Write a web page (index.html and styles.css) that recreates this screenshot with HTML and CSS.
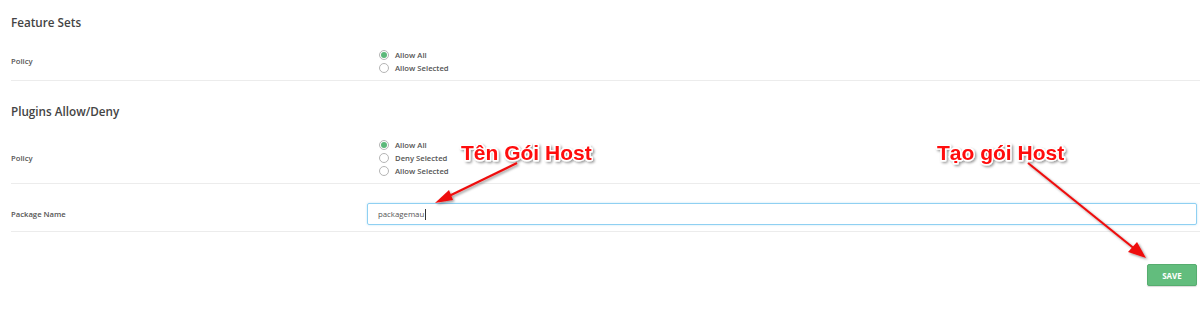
FILE: index.html
```html
<!DOCTYPE html>
<html>
<head>
<meta charset="utf-8">
<link rel="stylesheet" href="styles.css">
</head>
<body>
<div class="page">
  <section class="section first">
    <h2 class="heading">Feature Sets</h2>
    <div class="row">
      <div class="label">Policy</div>
      <div class="control">
        <div class="radios">
          <div class="radio"><span class="dot checked"></span>Allow All</div>
          <div class="radio"><span class="dot"></span>Allow Selected</div>
        </div>
      </div>
    </div>
  </section>
  <section class="section">
    <h2 class="heading">Plugins Allow/Deny</h2>
    <div class="row">
      <div class="label">Policy</div>
      <div class="control">
        <div class="radios">
          <div class="radio"><span class="dot checked"></span>Allow All</div>
          <div class="radio"><span class="dot"></span>Deny Selected</div>
          <div class="radio"><span class="dot"></span>Allow Selected</div>
        </div>
      </div>
    </div>
    <div class="row name-row">
      <div class="label">Package Name</div>
      <div class="control">
        <div class="input">packagemau<span class="caret"></span></div>
      </div>
    </div>
  </section>
  <div class="actions">
    <button class="save">SAVE</button>
  </div>

  <svg class="annotations" width="1200" height="311" viewBox="0 0 1200 311">
    <defs>
      <filter id="shadow" x="-20%" y="-40%" width="140%" height="180%">
        <feDropShadow dx="1.5" dy="1.5" stdDeviation="1.3" flood-color="#000" flood-opacity="0.4"/>
      </filter>
    </defs>
    <g filter="url(#shadow)">
      <line x1="517" y1="163" x2="447" y2="197" stroke="#ee1111" stroke-width="2.2"/>
      <polygon points="435,203 449,190 453,200" fill="#ee1111"/>
      <line x1="1028" y1="163" x2="1136" y2="250" stroke="#ee1111" stroke-width="2.2"/>
      <polygon points="1146,258 1128,252 1137,242" fill="#ee1111"/>
      <text class="note" x="461" y="160">Tên Gói Host</text>
      <text class="note" x="937" y="160">Tạo gói Host</text>
    </g>
  </svg>
</div>
</body>
</html>
```
FILE: styles.css
```css
html, body {
  margin: 0;
  padding: 0;
  background: #fff;
}
body {
  font-family: "Open Sans", "Liberation Sans", sans-serif;
  color: #555;
}
.page {
  position: relative;
  width: 1200px;
  height: 311px;
  padding-left: 11px;
  box-sizing: border-box;
  overflow: hidden;
}
.heading {
  margin: 0 0 12px 0;
  font-size: 11.7px;
  line-height: 16px;
  font-weight: 600;
  color: #444;
}
.section.first .heading {
  padding-top: 14px;
}
.section + .section .heading {
  margin-top: 22px;
}
.row {
  display: flex;
  align-items: center;
  padding: 6px 0;
  border-bottom: 1px solid #ececec;
}
.section + .section .row:first-of-type {
  padding-top: 7px;
  padding-bottom: 6px;
}
.name-row {
  padding-top: 19px;
  padding-bottom: 6px;
}
.label {
  width: 356px;
  flex: none;
  font-size: 7.7px;
  font-weight: 600;
  color: #555;
}
.control {
  flex: 1;
  padding-right: 3px;
}
.radios {
  padding-left: 12px;
}
.radio {
  display: flex;
  align-items: center;
  height: 13px;
  font-size: 7.7px;
  font-weight: 600;
  color: #555;
}
.dot {
  width: 8px;
  height: 8px;
  border: 1px solid #b5b5b5;
  border-radius: 50%;
  margin-right: 6px;
  box-sizing: content-box;
  display: inline-flex;
  align-items: center;
  justify-content: center;
  background: #fff;
}
.dot.checked::after {
  content: "";
  width: 6px;
  height: 6px;
  border-radius: 50%;
  background: #5cb87a;
}
.input {
  height: 20px;
  border: 1px solid #8fd0f2;
  border-radius: 2px;
  box-shadow: 0 0 2px rgba(120, 195, 240, 0.5);
  display: flex;
  align-items: center;
  padding-left: 10px;
  font-size: 7.8px;
  color: #555;
}
.caret {
  display: inline-block;
  width: 1px;
  height: 11px;
  background: #333;
  margin-left: 1px;
}
.actions {
  display: flex;
  justify-content: flex-end;
  padding-right: 3px;
  margin-top: 32px;
}
.save {
  width: 50px;
  height: 22px;
  border: 1px solid #56ad6f;
  border-radius: 2px;
  background: #62bd7d;
  color: #fff;
  font-family: "Open Sans", "Liberation Sans", sans-serif;
  font-size: 8px;
  font-weight: 700;
  padding: 0;
  box-shadow: 0 1px 1px rgba(0, 0, 0, 0.15);
}
.annotations {
  position: absolute;
  left: 0;
  top: 0;
  pointer-events: none;
}
.note {
  font-family: "Liberation Sans", Arial, sans-serif;
  font-weight: 700;
  font-size: 21px;
  fill: #ff0a0a;
  stroke: #fff;
  stroke-width: 3px;
  paint-order: stroke;
  stroke-linejoin: round;
}
```
